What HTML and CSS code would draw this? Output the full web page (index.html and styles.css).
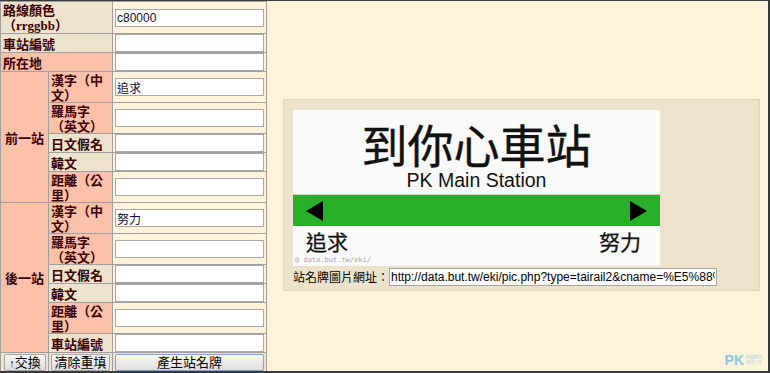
FILE: index.html
```html
<!DOCTYPE html>
<html lang="zh-Hant">
<head>
<meta charset="UTF-8">
<title>站名牌產生器</title>
<link rel="stylesheet" href="styles.css">
</head>
<body>

<div class="frame">
    <table class="form">
        <colgroup>
            <col class="col-group">
            <col class="col-label">
            <col class="col-field">
        </colgroup>
        <tr class="first">
            <th colspan="2" class="beige">路線顏色<br><span class="hint">（rrggbb）</span></th>
            <td><input type="text" value="c80000"></td>
        </tr>
        <tr class="one">
            <th colspan="2" class="beige">車站編號</th>
            <td><input type="text"></td>
        </tr>
        <tr class="one">
            <th colspan="2" class="salmon">所在地</th>
            <td><input type="text"></td>
        </tr>

        <tr class="two">
            <th rowspan="5" class="salmon group">前一站</th>
            <th class="salmon">漢字（中文）</th>
            <td><input type="text" value="追求"></td>
        </tr>
        <tr class="two">
            <th class="salmon">羅馬字（英文）</th>
            <td><input type="text"></td>
        </tr>
        <tr class="one">
            <th class="beige">日文假名</th>
            <td><input type="text"></td>
        </tr>
        <tr class="one">
            <th class="beige">韓文</th>
            <td><input type="text"></td>
        </tr>
        <tr class="two">
            <th class="salmon">距離（公里）</th>
            <td><input type="text"></td>
        </tr>

        <tr class="two">
            <th rowspan="6" class="salmon group">後一站</th>
            <th class="salmon">漢字（中文）</th>
            <td><input type="text" value="努力"></td>
        </tr>
        <tr class="two">
            <th class="salmon">羅馬字（英文）</th>
            <td><input type="text"></td>
        </tr>
        <tr class="one">
            <th class="beige">日文假名</th>
            <td><input type="text"></td>
        </tr>
        <tr class="one">
            <th class="beige">韓文</th>
            <td><input type="text"></td>
        </tr>
        <tr class="two">
            <th class="salmon">距離（公里）</th>
            <td><input type="text"></td>
        </tr>
        <tr class="one">
            <th class="beige">車站編號</th>
            <td><input type="text"></td>
        </tr>

        <tr class="one buttons">
            <td class="beige"><button class="btn btn-swap"><span class="arrow">↑</span>交換</button></td>
            <td class="beige"><button class="btn btn-clear">清除重填</button></td>
            <td class="beige"><button class="btn btn-main">產生站名牌</button></td>
        </tr>
    </table>

    <div class="preview">
        <div class="panel">
            <div class="sign">
                <div class="sign-top">
                    <div class="sign-name">到你心車站</div>
                    <div class="sign-en">PK Main Station</div>
                </div>
                <div class="sign-band">
                    <svg width="17" height="20" viewBox="0 0 17 20"><polygon points="17,0 17,20 0,10" fill="#000"/></svg>
                    <svg width="17" height="20" viewBox="0 0 17 20"><polygon points="0,0 0,20 17,10" fill="#000"/></svg>
                </div>
                <div class="sign-bottom">
                    <div class="sign-next">
                        <span>追求</span>
                        <span>努力</span>
                    </div>
                    <div class="credit">@ data.but.tw/eki/</div>
                </div>
            </div>
            <div class="url-row">
                <span class="url-label">站名牌圖片網址：</span>
                <input type="text" class="url-input" value="http://data.but.tw/eki/pic.php?type=tairail2&amp;cname=%E5%88%B0%E4%BD%A0%E5%BF%83">
            </div>
        </div>
    </div>

    <div class="watermark">
        <span class="watermark-logo">PK</span>
        <span class="watermark-sub">軟體應用<br>教學分享</span>
    </div>
</div>

</body>
</html>
```

FILE: styles.css
```css
body {
    margin: 0;
    font-family: "Noto Sans CJK TC", sans-serif;
    background-color: #fff3dc;
}

.frame {
    position: relative;
    display: flex;
    width: 770px;
    height: 373px;
    box-sizing: border-box;
    border-top: 1px solid #3a3a3a;
    border-right: 2px solid #3a3a3a;
    border-bottom: 2px solid #3a3a3a;
    background-color: #fff3dc; /* cream */
    overflow: hidden;
}

/* left form */
.form {
    flex: none;
    width: 267px;
    border-collapse: collapse;
    table-layout: fixed;
    font-size: 13px;
    line-height: 15px;
    align-self: flex-start;
}

.col-group { width: 48px; }
.col-label { width: 64px; }

.form th,
.form td {
    border: 1px solid #a0a0a0;
    padding: 0 2px;
    background-color: #fff3dc;
}

.form th {
    text-align: left;
    font-weight: 700;
    color: #3a0000;
    vertical-align: middle;
}

.form .beige { background-color: #ede3cc; }
.form .salmon { background-color: #fdc1aa; }

.form .group {
    padding-left: 4px;
}

.hint {
    font-family: "Liberation Serif", "Noto Sans CJK TC", serif;
}

.first th,
.first td { height: 31px; }

.one th,
.one td { height: 18px; }

.two th,
.two td { height: 30px; }

.form input {
    display: block;
    width: 149px;
    height: 18px;
    box-sizing: border-box;
    margin: 0;
    padding: 0 1px;
    border: 1px solid #a8a8a8;
    background-color: #fff;
    font-family: "Liberation Sans", "Noto Sans CJK TC", sans-serif;
    font-size: 12px;
    color: #101030;
}

.buttons td {
    padding: 0 0 0 2px;
}

.buttons td:first-child {
    padding-left: 3px;
}

.btn {
    display: block;
    height: 17px;
    margin: 0;
    padding: 0;
    border: 1px solid #a8a8a8;
    border-radius: 2px;
    background: linear-gradient(#f6f6f6, #dddddd);
    font-family: "Noto Sans CJK TC", sans-serif;
    font-size: 13px;
    line-height: 14px;
    color: #000;
    text-align: center;
    white-space: nowrap;
}

.btn-swap { width: 42px; }
.btn-clear { width: 59px; }

.arrow {
    font-family: "Liberation Sans", sans-serif;
    font-size: 11px;
}

.btn-main {
    width: 149px;
    border-color: #7aa8da;
}

/* right preview */
.preview {
    flex: 1;
    padding: 98px 8px 0 16px;
}

.panel {
    border: 1px solid #e2d5b8;
    background-color: #ede3cc;
    padding: 10px 0 4px 9px;
}

.sign {
    width: 367px;
    background-color: #fafafa;
}

.sign-top {
    height: 85px;
    padding-top: 10px;
    box-sizing: border-box;
    border-bottom: 1px solid #d6d6d6;
    text-align: center;
}

.sign-name {
    font-size: 46px;
    line-height: 46px;
    color: #111;
    -webkit-text-stroke: 0.4px #111;
}

.sign-en {
    margin-top: 4px;
    font-family: "Liberation Sans", sans-serif;
    font-size: 19.5px;
    line-height: 20px;
    color: #111;
}

.sign-band {
    display: flex;
    justify-content: space-between;
    align-items: center;
    height: 31px;
    padding: 0 13px;
    background-color: #27b12b;
}

.sign-bottom {
    height: 40px;
    padding-top: 5px;
    box-sizing: border-box;
}

.sign-next {
    display: flex;
    justify-content: space-between;
    padding: 0 19px 0 13px;
    font-size: 21px;
    line-height: 21px;
    color: #111;
    -webkit-text-stroke: 0.3px #111;
}

.credit {
    margin-top: 4px;
    padding-left: 2px;
    font-family: "DejaVu Sans Mono", monospace;
    font-size: 7px;
    line-height: 8px;
    color: #a8a8a8;
}

.url-row {
    display: flex;
    align-items: center;
    margin-top: 2px;
}

.url-label {
    font-size: 12px;
    line-height: 18px;
    color: #000;
}

.url-input {
    width: 328px;
    height: 18px;
    box-sizing: border-box;
    margin: 0;
    padding: 0 1px;
    border: 1px solid #a5a5a5;
    background-color: #fff;
    font-family: "Liberation Sans", sans-serif;
    font-size: 12px;
    color: #000;
}

/* corner watermark */
.watermark {
    position: absolute;
    right: 6px;
    bottom: 5px;
    display: flex;
    align-items: center;
    gap: 2px;
}

.watermark-logo {
    font-family: "Liberation Sans", sans-serif;
    font-weight: 700;
    font-size: 14px;
    line-height: 12px;
    color: #86c9e2;
}

.watermark-sub {
    font-size: 4px;
    line-height: 5px;
    color: #b6d6e2;
}
```
